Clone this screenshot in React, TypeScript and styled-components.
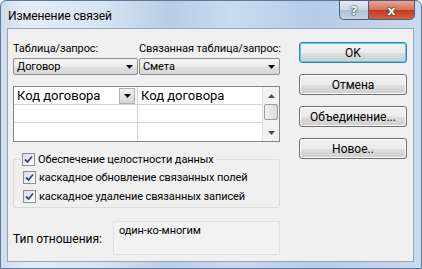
import React from 'react'
import styled, { createGlobalStyle } from 'styled-components'

const GlobalStyle = createGlobalStyle`
  html, body {
    margin: 0;
    padding: 0;
    background: #fff;
  }
  body {
    font-family: Roboto, "Noto Sans", "Liberation Sans", sans-serif;
    font-size: 11px;
    letter-spacing: -0.1px;
    color: #000;
  }
`

const Arrow = ({ color = '#000' }: { color?: string }) => (
  <svg width="7" height="4" viewBox="0 0 7 4">
    <path d="M0 0 H7 L3.5 4 Z" fill={color} />
  </svg>
)

const Check = () => (
  <svg width="9" height="9" viewBox="0 0 9 9">
    <path d="M1 4.5 L3.5 7 L8 1.5" stroke="#34487a" strokeWidth="1.8" fill="none" />
  </svg>
)

const CheckRow = ({ label, tall }: { label: string; tall?: boolean }) => (
  <CheckLine $tall={tall}>
    <Box>
      <Check />
    </Box>
    <span>{label}</span>
  </CheckLine>
)

export default function App() {
  return (
    <>
      <GlobalStyle />
      <Window>
        <TitleBar>
          <Title>Изменение связей</Title>
          <Caption>
            <HelpButton>?</HelpButton>
            <CloseButton>x</CloseButton>
          </Caption>
        </TitleBar>
        <Client>
          <Left>
            <Labels>
              <LabelCell $w={126}>Таблица/запрос:</LabelCell>
              <LabelCell>Связанная таблица/запрос:</LabelCell>
            </Labels>
            <Combos>
              <Combo $w={125}>
                <span>Договор</span>
                <Arrow />
              </Combo>
              <Combo>
                <span>Смета</span>
                <Arrow />
              </Combo>
            </Combos>
            <Grid>
              <Table>
                <Cell>
                  <span>Код договора</span>
                  <CellDrop>
                    <Arrow />
                  </CellDrop>
                </Cell>
                <Cell>
                  <span>Код договора</span>
                </Cell>
                <Cell />
                <Cell />
                <Cell $last />
                <Cell $last />
              </Table>
              <ScrollBar>
                <ScrollArrow>
                  <svg width="7" height="4" viewBox="0 0 7 4">
                    <path d="M0 4 H7 L3.5 0 Z" fill="#4d4d4d" />
                  </svg>
                </ScrollArrow>
                <Track>
                  <Thumb />
                </Track>
                <ScrollArrow>
                  <Arrow color="#4d4d4d" />
                </ScrollArrow>
              </ScrollBar>
            </Grid>
            <Group>
              <Legend>
                <CheckRow label="Обеспечение целостности данных" />
              </Legend>
              <CheckRow tall label="каскадное обновление связанных полей" />
              <CheckRow tall label="каскадное удаление связанных записей" />
            </Group>
            <Relation>
              <RelLabel>Тип отношения:</RelLabel>
              <RelValue>один-ко-многим</RelValue>
            </Relation>
          </Left>
          <Buttons>
            <Button $default>OK</Button>
            <Button>Отмена</Button>
            <Button>Объединение...</Button>
            <Button>Новое..</Button>
          </Buttons>
        </Client>
      </Window>
    </>
  )
}

const Window = styled.div`
  width: 422px;
  height: 269px;
  box-sizing: border-box;
  display: flex;
  flex-direction: column;
  border: 1px solid #5d7a9c;
  border-radius: 6px 6px 0 0;
  background: linear-gradient(
    to right,
    #cfdcea 0%,
    #e4edf7 6%,
    #d6e3f1 25%,
    #b8cde6 40%,
    #c9dbef 55%,
    #b5cbe6 75%,
    #c8daee 100%
  );
`

const TitleBar = styled.div`
  height: 27px;
  display: flex;
  justify-content: space-between;
  align-items: flex-start;
  padding-left: 7px;
`

const Title = styled.div`
  padding-top: 7px;
  line-height: 16px;
  font-size: 12px;
  color: #000;
`

const Caption = styled.div`
  display: flex;
  margin-right: 6px;
  margin-top: -1px;
`

const CapBase = styled.div`
  height: 20px;
  box-sizing: border-box;
  display: flex;
  align-items: center;
  justify-content: center;
  font-family: "DejaVu Sans", sans-serif;
  font-weight: bold;
  color: #fff;
  border: 1px solid #4b5f79;
  text-shadow: 0 0 2px #233, 0 0 1px #000;
`

const HelpButton = styled(CapBase)`
  width: 29px;
  font-size: 13px;
  border-right: none;
  border-radius: 0 0 0 5px;
  background: linear-gradient(to bottom, #e3ebf4 0%, #c9d7e6 50%, #aebfd4 51%, #c4d4e6 100%);
`

const CloseButton = styled(CapBase)`
  width: 47px;
  font-size: 13px;
  border-radius: 0 0 5px 0;
  background: linear-gradient(to bottom, #e8a597 0%, #d8705c 50%, #c2391e 51%, #d6623f 100%);
`

const Client = styled.div`
  flex: 1;
  margin: 0 7px 6px 6px;
  background: #f0f0f0;
  border: 1px solid #8ea4bf;
  display: flex;
  padding: 12px 6px 0 5px;
`

const Left = styled.div`
  width: 267px;
  display: flex;
  flex-direction: column;
`

const Labels = styled.div`
  display: flex;
  line-height: 15px;
  height: 15px;
`

const LabelCell = styled.div<{ $w?: number }>`
  width: ${(p) => (p.$w ? `${p.$w}px` : 'auto')};
  flex: ${(p) => (p.$w ? 'none' : '1')};
  white-space: nowrap;
`

const Combos = styled.div`
  display: flex;
  gap: 1px;
  margin-top: 2px;
`

const Combo = styled.div<{ $w?: number }>`
  width: ${(p) => (p.$w ? `${p.$w}px` : 'auto')};
  flex: ${(p) => (p.$w ? 'none' : '1')};
  height: 17px;
  box-sizing: border-box;
  border: 1px solid #8e8f8f;
  border-radius: 2px;
  background: linear-gradient(to bottom, #f6f6f6 0%, #ececec 50%, #e0e0e0 51%, #d8d8d8 100%);
  display: flex;
  align-items: center;
  justify-content: space-between;
  padding: 0 4px 0 3px;
  line-height: 15px;
`

const Grid = styled.div`
  margin-top: 11px;
  height: 56px;
  box-sizing: border-box;
  border: 1px solid #828790;
  background: #fff;
  display: flex;
`

const Table = styled.div`
  flex: 1;
  display: grid;
  grid-template-columns: 124px 1fr;
  grid-template-rows: 18px 18px 18px;
`

const Cell = styled.div<{ $last?: boolean }>`
  border-bottom: ${(p) => (p.$last ? 'none' : '1px solid #d4d4d4')};
  box-sizing: border-box;
  display: flex;
  align-items: center;
  justify-content: space-between;
  padding-left: 3px;
  font-size: 13px;
  letter-spacing: 0;
  &:nth-child(odd) {
    border-right: 1px solid #d4d4d4;
  }
`

const CellDrop = styled.div`
  width: 16px;
  height: 16px;
  box-sizing: border-box;
  margin-right: 2px;
  border: 1px solid #b0b0b0;
  background: linear-gradient(to bottom, #f2f2f2, #d6d6d6);
  display: flex;
  align-items: center;
  justify-content: center;
`

const ScrollBar = styled.div`
  width: 16px;
  border-left: 1px solid #e2e2e2;
  display: flex;
  flex-direction: column;
  background: #f2f2f2;
`

const ScrollArrow = styled.div`
  height: 17px;
  display: flex;
  align-items: center;
  justify-content: center;
`

const Track = styled.div`
  flex: 1;
  display: flex;
  flex-direction: column;
`

const Thumb = styled.div`
  height: 14px;
  margin: 0 1px;
  border: 1px solid #9b9b9b;
  border-radius: 2px;
  background: linear-gradient(to right, #f3f3f3, #dcdcdc);
`

const Group = styled.fieldset`
  margin: 8px 0 0 0;
  padding: 0 0 1px 6px;
  border: 1px solid #dcdcdc;
  border-radius: 2px;
  min-width: 0;
`

const Legend = styled.legend`
  padding: 0 2px;
`

const CheckLine = styled.div<{ $tall?: boolean }>`
  height: ${(p) => (p.$tall ? '19px' : '18px')};
  display: flex;
  align-items: center;
  gap: 3px;
  line-height: 15px;
  white-space: nowrap;
  padding-left: ${(p) => (p.$tall ? '3px' : '0')};
`

const Box = styled.div`
  width: 13px;
  height: 13px;
  box-sizing: border-box;
  border: 1px solid #8f8f8f;
  background: linear-gradient(135deg, #dcdcdc 0%, #f2f2f2 60%, #fff 100%);
  display: flex;
  align-items: center;
  justify-content: center;
`

const Relation = styled.div`
  margin-top: 13px;
  display: flex;
  align-items: center;
`

const RelLabel = styled.div`
  width: 100px;
  line-height: 15px;
  padding-top: 2px;
  font-size: 12px;
  letter-spacing: 0;
`

const RelValue = styled.div`
  flex: 1;
  height: 34px;
  box-sizing: border-box;
  border: 1px solid #e0e0e0;
  background: #f2f2f2;
  padding: 1px 5px 0;
  line-height: 15px;
`

const Buttons = styled.div`
  margin-left: 19px;
  margin-top: 1px;
  display: flex;
  flex-direction: column;
  gap: 11px;
`

const Button = styled.button<{ $default?: boolean }>`
  width: 108px;
  height: 21px;
  font-family: inherit;
  font-size: 12px;
  letter-spacing: 0;
  color: #000;
  padding: 0;
  border-radius: 3px;
  border: 1px solid ${(p) => (p.$default ? '#3c7fb1' : '#707070')};
  background: linear-gradient(to bottom, #f2f2f2 0%, #ebebeb 50%, #dddddd 51%, #cfcfcf 100%);
  box-shadow: ${(p) => (p.$default ? 'inset 0 0 0 1px #48d0f5' : 'inset 0 0 0 1px #fbfbfb')};
`
